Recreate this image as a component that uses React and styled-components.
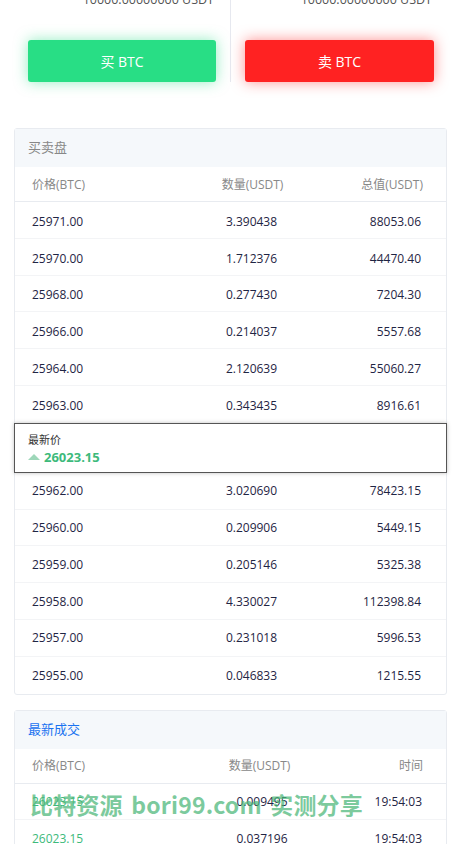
import React from "react";
import styled, { createGlobalStyle } from "styled-components";

const Global = createGlobalStyle`
  html, body {
    margin: 0;
    padding: 0;
    background: #ffffff;
    overflow: hidden;
  }
  body {
    font-family: "Open Sans", "Noto Sans", "Noto Sans CJK SC", sans-serif;
    color: #222;
  }
  * { box-sizing: border-box; }
`;

const Page = styled.div`
  position: relative;
  width: 462px;
  padding-bottom: 40px;
`;

const TradeBar = styled.div`
  display: grid;
  grid-template-columns: 230px 1fr;
`;

const TradeCol = styled.div`
  display: flex;
  flex-direction: column;
  padding: 0 ${(p) => (p.$side === "buy" ? "14px 0 28px" : "28px 0 14px")};
  border-left: ${(p) => (p.$side === "sell" ? "1px solid #e6e8ef" : "none")};
  height: 82px;
`;

const Balance = styled.div`
  margin-top: -8px;
  height: 16px;
  line-height: 16px;
  text-align: right;
  font-size: 12.5px;
  color: #555;
  padding-right: 2px;
`;

const TradeButton = styled.button`
  margin-top: 32px;
  height: 42px;
  border: none;
  border-radius: 3px;
  color: #fff;
  font-family: inherit;
  font-size: 14px;
  background: ${(p) => (p.$side === "buy" ? "#28de85" : "#ff2222")};
  box-shadow: 0 0 14px
    ${(p) => (p.$side === "buy" ? "rgba(40,222,133,0.5)" : "rgba(255,34,34,0.5)")};
`;

const Card = styled.section`
  margin: ${(p) => p.$top}px 15px 0 14px;
  border: 1px solid #e8ebf0;
  border-radius: 3px;
  background: #fff;
`;

const CardHead = styled.div`
  height: 38px;
  background: #f5f8fb;
  display: flex;
  align-items: center;
  padding: 0 0 3px 13px;
  font-size: 13px;
  color: ${(p) => (p.$active ? "#1a73f0" : "#888")};
`;

const ColHead = styled.div`
  display: grid;
  grid-template-columns: 1fr 1fr 1fr;
  align-items: center;
  height: 35px;
  padding: 0 23px 1px 17px;
  border-bottom: 1px solid #e8ebf0;
  font-size: 12px;
  color: #888;
`;

const Row = styled.div`
  display: grid;
  grid-template-columns: 1fr 1fr 1fr;
  align-items: center;
  height: 36.8px;
  padding: ${(p) => p.$drop ?? 0}px ${(p) => p.$right ?? 25}px 0 17px;
  border-bottom: ${(p) => (p.$last ? "none" : "1px solid #f3f4f6")};
  font-size: 12px;
  color: #1f2544;
`;

const Cell = styled.span`
  text-align: ${(p) => p.$align || "left"};
  color: ${(p) => (p.$up ? "#3dba7b" : "inherit")};
  padding-left: ${(p) => (p.$align === "center" ? `${p.$shift ?? 50}px` : "0")};
`;

const LastPrice = styled.div`
  height: 50px;
  border: 1px solid #555;
  box-shadow: 0 0 4px rgba(0, 0, 0, 0.25);
  padding: 8px 13px 0;
  margin: 0 -1px;
  position: relative;
  background: #fff;
`;

const LastLabel = styled.div`
  font-size: 11px;
  color: #333;
  line-height: 15px;
`;

const LastValue = styled.div`
  display: flex;
  align-items: center;
  gap: 4px;
  font-size: 13px;
  font-weight: 700;
  color: #3dba7b;
  line-height: 20px;
`;

const Arrow = styled.span`
  width: 0;
  height: 0;
  border-left: 6px solid transparent;
  border-right: 6px solid transparent;
  border-bottom: 6px solid #9ed7b9;
`;

const ScrollList = styled.div`
  height: 80px;
  overflow-y: scroll;
  &::-webkit-scrollbar {
    width: 4px;
  }
  &::-webkit-scrollbar-track {
    background: #fff;
  }
  &::-webkit-scrollbar-thumb {
    background: #d2d2d2;
    border-radius: 2px;
  }
`;

const Watermark = styled.div`
  position: absolute;
  left: 30px;
  top: 787px;
  font-family: "Noto Sans CJK SC", "Noto Sans", sans-serif;
  font-size: 23px;
  font-weight: 700;
  letter-spacing: 0.2px;
  word-spacing: 3px;
  white-space: nowrap;
  color: rgba(74, 182, 120, 0.72);
  pointer-events: none;
`;

const asks = [
  ["25971.00", "3.390438", "88053.06"],
  ["25970.00", "1.712376", "44470.40"],
  ["25968.00", "0.277430", "7204.30"],
  ["25966.00", "0.214037", "5557.68"],
  ["25964.00", "2.120639", "55060.27"],
  ["25963.00", "0.343435", "8916.61"],
];

const bids = [
  ["25962.00", "3.020690", "78423.15"],
  ["25960.00", "0.209906", "5449.15"],
  ["25959.00", "0.205146", "5325.38"],
  ["25958.00", "4.330027", "112398.84"],
  ["25957.00", "0.231018", "5996.53"],
  ["25955.00", "0.046833", "1215.55"],
];

const trades = [
  ["26023.15", "0.009495", "19:54:03"],
  ["26023.15", "0.037196", "19:54:03"],
  ["26023.15", "0.120514", "19:54:02"],
];

const BookRow = ({ r, last, drop }) => (
  <Row $last={last} $drop={drop}>
    <Cell>{r[0]}</Cell>
    <Cell $align="center">{r[1]}</Cell>
    <Cell $align="right">{r[2]}</Cell>
  </Row>
);

export default function App() {
  return (
    <Page>
      <Global />
      <TradeBar>
        <TradeCol $side="buy">
          <Balance>10000.00000000 USDT</Balance>
          <TradeButton $side="buy">买 BTC</TradeButton>
        </TradeCol>
        <TradeCol $side="sell">
          <Balance>10000.00000000 USDT</Balance>
          <TradeButton $side="sell">卖 BTC</TradeButton>
        </TradeCol>
      </TradeBar>

      <Card $top={46}>
        <CardHead>买卖盘</CardHead>
        <ColHead>
          <Cell>价格(BTC)</Cell>
          <Cell $align="center">数量(USDT)</Cell>
          <Cell $align="right">总值(USDT)</Cell>
        </ColHead>
        {asks.map((r, i) => (
          <BookRow key={r[0]} r={r} drop={3} last={i === asks.length - 1} />
        ))}
        <LastPrice>
          <LastLabel>最新价</LastLabel>
          <LastValue>
            <Arrow />
            26023.15
          </LastValue>
        </LastPrice>
        {bids.map((r, i) => (
          <BookRow key={r[0]} r={r} last={i === bids.length - 1} />
        ))}
      </Card>

      <Card $top={15}>
        <CardHead $active>最新成交</CardHead>
        <ColHead>
          <Cell>价格(BTC)</Cell>
          <Cell $align="center" $shift={64}>数量(USDT)</Cell>
          <Cell $align="right">时间</Cell>
        </ColHead>
        <ScrollList>
          {trades.map((r, i) => (
            <Row key={i} $right={24}>
              <Cell $up>{r[0]}</Cell>
              <Cell $align="center" $shift={70}>{r[1]}</Cell>
              <Cell $align="right">{r[2]}</Cell>
            </Row>
          ))}
        </ScrollList>
      </Card>

      <Watermark>比特资源 bori99.com 实测分享</Watermark>
    </Page>
  );
}
